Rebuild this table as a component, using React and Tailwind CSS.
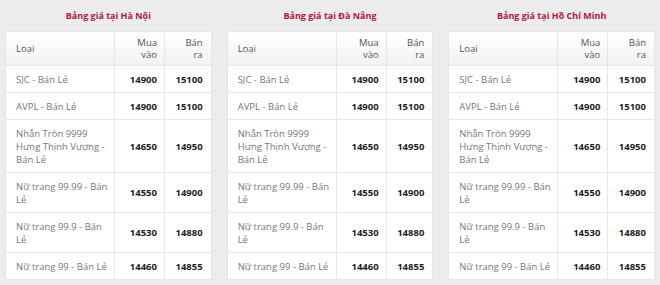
import React from 'react';

const rows = [
  { name: 'SJC - Bán Lẻ', buy: '14900', sell: '15100' },
  { name: 'AVPL - Bán Lẻ', buy: '14900', sell: '15100' },
  { name: 'Nhẫn Tròn 9999 Hưng Thịnh Vượng - Bán Lẻ', buy: '14650', sell: '14950' },
  { name: 'Nữ trang 99.99 - Bán Lẻ', buy: '14550', sell: '14900' },
  { name: 'Nữ trang 99.9 - Bán Lẻ', buy: '14530', sell: '14880' },
  { name: 'Nữ trang 99 - Bán Lẻ', buy: '14460', sell: '14855' },
];

const cities = ['Hà Nội', 'Đà Nẵng', 'Hồ Chí Minh'];

function PriceTable({ city }) {
  return (
    <div>
      <h3 className="text-center text-[9px] leading-[13px] font-bold text-[#b3163c] mb-[9px]">
        Bảng giá tại {city}
      </h3>
      <table className="w-full table-fixed border-collapse bg-white border border-[#e3e3e3]">
        <colgroup>
          <col className="w-[109px]" />
          <col className="w-[50px]" />
          <col />
        </colgroup>
        <thead>
          <tr className="bg-gradient-to-b from-white to-[#f2f2f2] text-[#555] text-[9.5px] leading-[12px]">
            <th className="text-left font-normal pl-[10px] pr-2 py-[4.5px] border border-[#e6e6e6] align-middle">Loại</th>
            <th className="text-right font-normal pl-1 pr-[7px] py-[4.5px] border border-[#e6e6e6]">Mua<br />vào</th>
            <th className="text-right font-normal pl-1 pr-[8px] py-[4.5px] border border-[#e6e6e6]">Bán<br />ra</th>
          </tr>
        </thead>
        <tbody>
          {rows.map((r) => (
            <tr key={r.name} className="text-[9.5px] leading-[13px]">
              <td className="text-[#777] pl-[10px] pr-[6px] py-[6.5px] border border-[#e6e6e6] align-middle">{r.name}</td>
              <td className="text-right font-bold text-[#222] pr-[7px] py-[6.5px] border border-[#e6e6e6] align-middle">{r.buy}</td>
              <td className="text-right font-bold text-[#222] pr-[8px] py-[6.5px] border border-[#e6e6e6] align-middle">{r.sell}</td>
            </tr>
          ))}
        </tbody>
      </table>
    </div>
  );
}

export default function App() {
  return (
    <div className="w-[660px] h-[285px] bg-[#ececec] font-['Open_Sans',sans-serif] px-[5px] pt-[9px] overflow-hidden">
      <div className="grid grid-cols-3 gap-[15px]">
        {cities.map((c) => (
          <PriceTable key={c} city={c} />
        ))}
      </div>
    </div>
  );
}
